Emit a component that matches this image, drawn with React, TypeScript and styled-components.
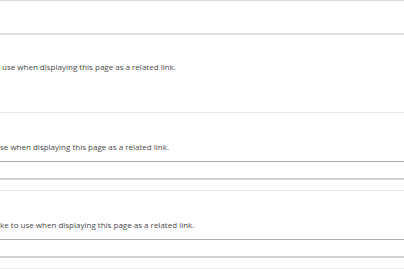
import { createGlobalStyle } from "styled-components";
import styled from "styled-components";

const Global = createGlobalStyle`
  html, body {
    margin: 0;
    padding: 0;
    background: #fff;
    overflow: hidden;
  }
  body {
    font-family: "Open Sans", "Liberation Sans", sans-serif;
  }
`;

const Page = styled.div`
  width: 404px;
  height: 269px;
  overflow: hidden;
  border-top: 1px solid #dcdcdc;
  box-sizing: border-box;
`;

const Header = styled.div`
  height: 32px;
  border-bottom: 2px solid #e0e0e0;
`;

const Field = styled.div<{ $top: number; $bottom: number }>`
  display: flex;
  flex-direction: column;
  gap: 8px;
  padding: ${({ $top }) => $top}px 0 ${({ $bottom }) => $bottom}px;
  border-bottom: 1px solid #e8e8e8;
`;

const Description = styled.p<{ $indent?: number }>`
  margin: 0;
  padding-left: ${({ $indent }) => $indent ?? 0}px;
  font-size: 8px;
  line-height: 12px;
  color: #4a4a4a;
  white-space: nowrap;
`;

const Input = styled.input`
  display: block;
  width: 420px;
  height: 19px;
  margin: 0;
  padding: 0 6px;
  box-sizing: border-box;
  border: none;
  border-top: 1px solid #a7aeb6;
  border-bottom: 2px solid #cfd3d7;
  background: #fff;
  outline: none;
`;

export default function App() {
  return (
    <>
      <Global />
      <Page>
        <Header />
        <Field $top={26} $bottom={39}>
          <Description $indent={2}>
            use when displaying this page as a related link.
          </Description>
        </Field>
        <Field $top={28} $bottom={10}>
          <Description>se when displaying this page as a related link.</Description>
          <Input type="text" />
        </Field>
        <Field $top={28} $bottom={10}>
          <Description>
            ke to use when displaying this page as a related link.
          </Description>
          <Input type="text" />
        </Field>
      </Page>
    </>
  );
}
